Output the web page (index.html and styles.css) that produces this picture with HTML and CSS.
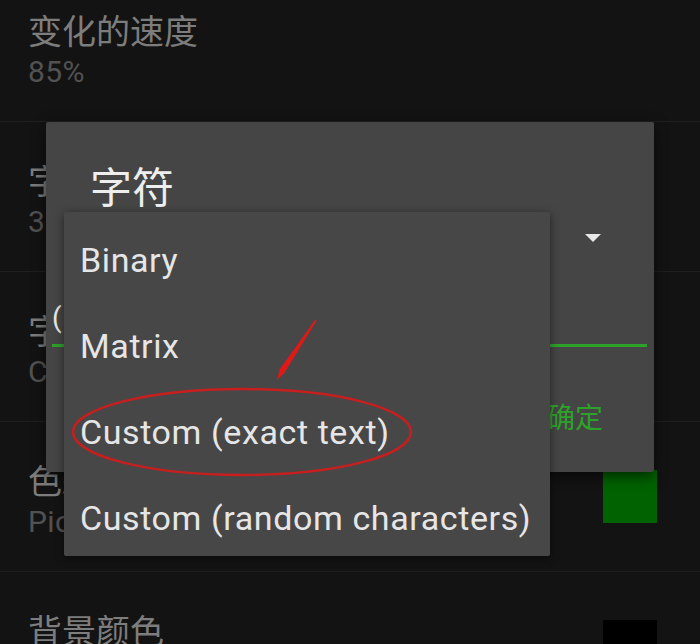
FILE: index.html
```html
<!DOCTYPE html>
<html lang="zh">
<head>
<meta charset="utf-8">
<title>Settings</title>
<link rel="stylesheet" href="styles.css">
</head>
<body>
<div class="screen">
  <div class="settings">
    <div class="row">
      <div class="row-text">
        <div class="row-title">变化的速度</div>
        <div class="row-summary">85%</div>
      </div>
    </div>
    <div class="row">
      <div class="row-text">
        <div class="row-title">字体大小</div>
        <div class="row-summary">30</div>
      </div>
    </div>
    <div class="row">
      <div class="row-text">
        <div class="row-title">字符</div>
        <div class="row-summary">Custom (exact text)</div>
      </div>
    </div>
    <div class="row">
      <div class="row-text">
        <div class="row-title">色彩</div>
        <div class="row-summary">Pick a color</div>
      </div>
      <div class="swatch swatch-green"></div>
    </div>
    <div class="row">
      <div class="row-text">
        <div class="row-title">背景颜色</div>
        <div class="row-summary">Pick a color</div>
      </div>
      <div class="swatch swatch-black"></div>
    </div>
  </div>

  <div class="dialog">
    <div class="dlg-title">字符</div>
    <div class="spinner">
      <svg class="caret" width="16" height="8" viewBox="0 0 16 8"><path d="M0 0 H16 L8 8 Z" fill="#e8e8e8"/></svg>
    </div>
    <div class="field"><span class="field-text">(</span></div>
    <div class="actions"><span class="btn">确定</span></div>
  </div>

  <div class="popup">
    <div class="item">Binary</div>
    <div class="item">Matrix</div>
    <div class="item">Custom (exact text)</div>
    <div class="item">Custom (random characters)</div>
  </div>

  <svg class="annotation" width="700" height="644" viewBox="0 0 700 644">
    <ellipse cx="242" cy="432" rx="169" ry="43" fill="none" stroke="#c81e1e" stroke-width="2.5"/>
    <path d="M315.3 319.6 L316.7 320.4 L284.6 372.4 L277 380 L279.6 369.6 Z" fill="#e01818"/>
  </svg>
</div>
</body>
</html>
```

FILE: styles.css
```css
html, body {
  margin: 0;
  padding: 0;
  background: #131313;
}

.screen {
  position: relative;
  width: 700px;
  height: 644px;
  overflow: hidden;
  font-family: Roboto, "Noto Sans CJK SC", sans-serif;
}

.settings {
  margin-top: -28px;
}

.row {
  height: 150px;
  box-sizing: border-box;
  border-bottom: 1px solid #1f1f1f;
  display: flex;
  align-items: center;
  padding: 0 43px 0 28px;
}

.row-text {
  flex: 1;
  margin-top: 6px;
  white-space: nowrap;
}

.row-title {
  font-family: "Noto Sans CJK SC", Roboto, sans-serif;
  font-size: 34px;
  line-height: 44px;
  color: #7d7d7d;
}

.row-summary {
  font-size: 30px;
  line-height: 40px;
  letter-spacing: 0.4px;
  color: #525252;
}

.swatch {
  width: 54px;
  height: 53px;
  flex: none;
}

.swatch-green { background: #006200; }
.swatch-black { background: #000000; }

.dialog {
  position: absolute;
  left: 46px;
  top: 122px;
  width: 608px;
  height: 350px;
  background: #454545;
  border-radius: 2px;
  box-shadow: 0 4px 14px rgba(0, 0, 0, 0.6);
  display: flex;
  flex-direction: column;
}

.dlg-title {
  padding: 35px 44px 0;
  font-family: "Noto Sans CJK SC", sans-serif;
  font-size: 42px;
  line-height: 56px;
  color: #eeeeee;
}

.spinner {
  height: 50px;
  display: flex;
  justify-content: flex-end;
  align-items: center;
  padding-right: 53px;
}

.caret { display: block; }

.field {
  margin: 0 7px 0 6px;
  height: 84px;
  box-sizing: border-box;
  padding-top: 35px;
  border-bottom: 3px solid #2ea12a;
}

.field-text {
  font-size: 28px;
  line-height: 40px;
  color: #e6e6e6;
}

.actions {
  display: flex;
  justify-content: flex-end;
  padding-right: 51px;
  margin-top: 50px;
}

.btn {
  font-family: "Noto Sans CJK SC", sans-serif;
  font-size: 28px;
  line-height: 38px;
  color: #2ea12a;
}

.popup {
  position: absolute;
  left: 64px;
  top: 212px;
  width: 486px;
  height: 344px;
  box-sizing: border-box;
  padding: 5px 0;
  background: #474747;
  border-radius: 2px;
  box-shadow: 0 2px 8px rgba(0, 0, 0, 0.5);
}

.item {
  height: 86px;
  display: flex;
  align-items: center;
  padding-left: 16px;
  font-size: 34px;
  letter-spacing: 0.6px;
  color: #e6e6e6;
  white-space: nowrap;
}

.annotation {
  position: absolute;
  left: 0;
  top: 0;
  pointer-events: none;
}
```
